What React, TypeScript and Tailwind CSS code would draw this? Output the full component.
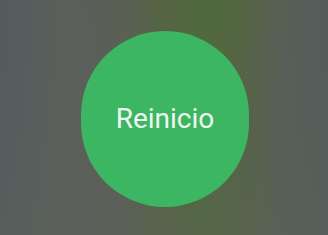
export default function App() {
  return (
    <div className="relative h-[235px] w-[328px] overflow-hidden bg-[linear-gradient(90deg,#535b5e_0%,#5a5f5c_15%,#5a6056_36%,#566446_48%,#506a3b_62%,#546642_72%,#585f55_86%,#545c5b_100%)]">
      <div className="absolute inset-0 bg-[linear-gradient(180deg,rgba(90,96,92,0)_0%,rgba(90,96,92,0.15)_50%,rgba(92,98,90,0.4)_100%)]" />
      <div className="relative flex h-full items-center justify-center pl-[2px] pt-[3px]">
        <button className="flex h-[176px] w-[168px] items-center justify-center rounded-full bg-[#3db663] font-['Roboto',sans-serif] text-[28px] text-[#eef6ef]">
          Reinicio
        </button>
      </div>
    </div>
  );
}
